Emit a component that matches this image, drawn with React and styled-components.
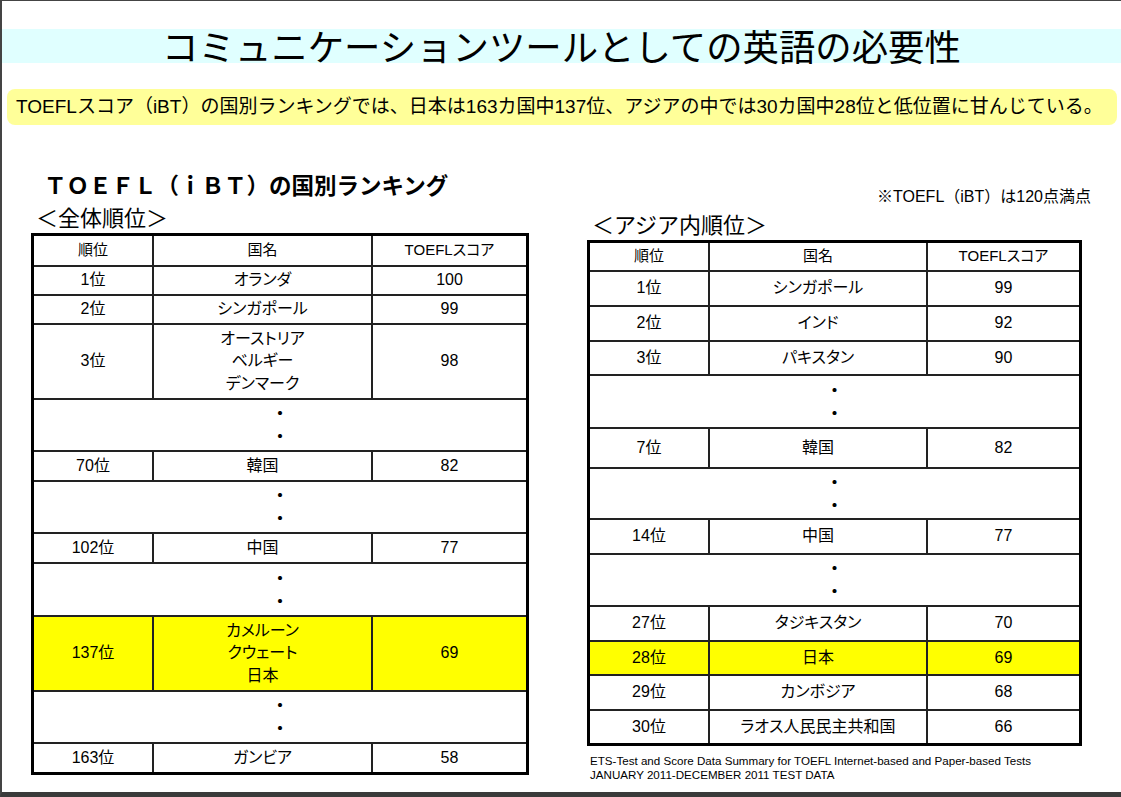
import React from 'react';
import styled, { createGlobalStyle } from 'styled-components';

const GlobalStyle = createGlobalStyle`
  html, body {
    margin: 0;
    padding: 0;
    background: #fff;
  }
  body {
    font-family: "Liberation Sans", "Noto Sans CJK JP", sans-serif;
    color: #000;
  }
`;

const Page = styled.div`
  box-sizing: border-box;
  width: 1121px;
  height: 797px;
  border-top: 1px solid #444;
  border-left: 2px solid #444;
  border-bottom: 5px solid #3a3a3a;
  overflow: hidden;
`;

const TitleBand = styled.div`
  margin-top: 28px;
  height: 34px;
  background: #e0ffff;
  display: flex;
  justify-content: center;
`;

const Title = styled.h1`
  margin: 0;
  font-size: 36.4px;
  font-weight: normal;
  line-height: 40px;
  white-space: nowrap;
`;

const Banner = styled.div`
  margin: 26px 4px 0 5px;
  height: 36px;
  border-radius: 8px;
  background: #ffff99;
  padding-left: 9px;
  font-size: 19px;
  line-height: 36px;
  white-space: nowrap;
`;

const Columns = styled.div`
  display: flex;
  align-items: flex-start;
`;

const Column = styled.section`
  display: flex;
  flex-direction: column;
  width: ${p => p.$width}px;
  margin-left: ${p => p.$left}px;
  margin-top: ${p => p.$top}px;
`;

const Heading = styled.h2`
  margin: 0 0 8px 13px;
  font-size: 22.5px;
  font-weight: bold;
  line-height: 24px;
  white-space: nowrap;
`;

const Note = styled.div`
  align-self: flex-end;
  margin: 0 4px 8px 0;
  font-size: 16px;
  line-height: 18px;
  white-space: nowrap;
`;

const SubHeading = styled.h3`
  margin: 0 0 2px 5px;
  font-size: 22px;
  font-weight: normal;
  line-height: 24px;
  white-space: nowrap;
`;

const Table = styled.div`
  box-sizing: border-box;
  width: ${p => p.$width}px;
  border: 3px solid #000;
  font-feature-settings: "palt";
`;

const Row = styled.div`
  box-sizing: border-box;
  display: grid;
  grid-template-columns: ${p => p.$cols};
  height: ${p => p.$h}px;
  background: ${p => (p.$hl ? '#ffff00' : '#fff')};
  font-size: ${p => (p.$head ? 15 : 16)}px;

  & + & {
    border-top: 2px solid #222;
  }
`;

const Cell = styled.div`
  display: flex;
  flex-direction: column;
  align-items: center;
  justify-content: center;
  text-align: center;
  line-height: 22.5px;

  & + & {
    border-left: 2px solid #222;
  }
`;

const Dots = styled(Cell)`
  grid-column: 1 / -1;
  line-height: 23px;
  font-weight: bold;
`;

const Source = styled.div`
  margin: 8px 0 0 3px;
  font-size: 11.6px;
  line-height: 14px;
  white-space: nowrap;
`;

const overall = [
  { h: 29, head: true, cells: ['順位', '国名', 'TOEFLスコア'] },
  { h: 29, cells: ['1位', 'オランダ', '100'] },
  { h: 29, cells: ['2位', 'シンガポール', '99'] },
  { h: 75, cells: ['3位', ['オーストリア', 'ベルギー', 'デンマーク'], '98'] },
  { h: 52, dots: true },
  { h: 30, cells: ['70位', '韓国', '82'] },
  { h: 52, dots: true },
  { h: 30, cells: ['102位', '中国', '77'] },
  { h: 53, dots: true },
  { h: 75, hl: true, cells: ['137位', ['カメルーン', 'クウェート', '日本'], '69'] },
  { h: 52, dots: true },
  { h: 30, cells: ['163位', 'ガンビア', '58'] },
];

const asia = [
  { h: 27, head: true, cells: ['順位', '国名', 'TOEFLスコア'] },
  { h: 35, cells: ['1位', 'シンガポール', '99'] },
  { h: 35, cells: ['2位', 'インド', '92'] },
  { h: 34, cells: ['3位', 'パキスタン', '90'] },
  { h: 53, dots: true },
  { h: 40, cells: ['7位', '韓国', '82'] },
  { h: 51, dots: true },
  { h: 35, cells: ['14位', '中国', '77'] },
  { h: 52, dots: true },
  { h: 35, cells: ['27位', 'タジキスタン', '70'] },
  { h: 34, hl: true, cells: ['28位', '日本', '69'] },
  { h: 35, cells: ['29位', 'カンボジア', '68'] },
  { h: 34, cells: ['30位', 'ラオス人民民主共和国', '66'] },
];

const RankTable = ({ rows, width, cols }) => (
  <Table $width={width}>
    {rows.map((r, i) => (
      <Row key={i} $h={r.h} $hl={r.hl} $head={r.head} $cols={cols}>
        {r.dots ? (
          <Dots>
            <span>・</span>
            <span>・</span>
          </Dots>
        ) : (
          r.cells.map((c, j) => (
            <Cell key={j}>
              {Array.isArray(c) ? c.map(line => <span key={line}>{line}</span>) : c}
            </Cell>
          ))
        )}
      </Row>
    ))}
  </Table>
);

export default function App() {
  return (
    <>
      <GlobalStyle />
      <Page>
        <TitleBand>
          <Title>コミュニケーションツールとしての英語の必要性</Title>
        </TitleBand>
        <Banner>
          TOEFLスコア（iBT）の国別ランキングでは、日本は163カ国中137位、アジアの中では30カ国中28位と低位置に甘んじている。
        </Banner>
        <Columns>
          <Column $width={498} $left={29} $top={50}>
            <Heading>ＴＯＥＦＬ（ｉＢＴ）の国別ランキング</Heading>
            <SubHeading>＜全体順位＞</SubHeading>
            <RankTable rows={overall} width={498} cols="118px 219px 155px" />
          </Column>
          <Column $width={508} $left={58} $top={63}>
            <Note>※TOEFL（iBT）は120点満点</Note>
            <SubHeading>＜アジア内順位＞</SubHeading>
            <RankTable rows={asia} width={495} cols="118px 218px 153px" />
            <Source>
              ETS-Test and Score Data Summary for TOEFL Internet-based and Paper-based Tests
              <br />
              JANUARY 2011-DECEMBER 2011 TEST DATA
            </Source>
          </Column>
        </Columns>
      </Page>
    </>
  );
}
